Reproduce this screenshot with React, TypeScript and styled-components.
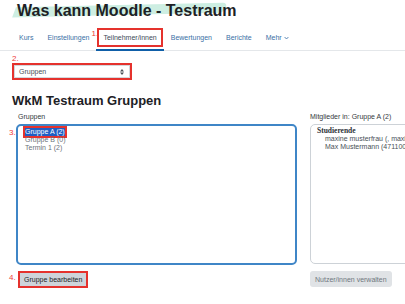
import styled, { createGlobalStyle } from "styled-components";

const GlobalStyle = createGlobalStyle`
  html, body {
    margin: 0;
    padding: 0;
    background: #ffffff;
  }

  body {
    font-family: "Liberation Sans", Arial, sans-serif;
    color: #1d2125;
    width: 405px;
    height: 304px;
    overflow: hidden;
  }
`;

const red = "#e5322d";

const Page = styled.div`
  width: 405px;
  padding-top: 1px;
`;

const TitleRow = styled.div`
  padding-left: 17px;
`;

const Title = styled.h1`
  position: relative;
  isolation: isolate;
  display: inline-block;
  margin: 0;
  font-size: 16px;
  line-height: 20px;
  font-weight: 700;
  color: #1d2125;
  white-space: nowrap;

  &::before {
    content: "";
    position: absolute;
    left: -3px;
    width: 212px;
    top: 4px;
    height: 10px;
    background: #cdeee2;
    border-radius: 0 5px 5px 0;
    transform: rotate(-1.3deg) skewX(-22deg);
    z-index: -1;
  }
`;

const Nav = styled.ul`
  list-style: none;
  display: flex;
  margin: 6px 0 0;
  padding: 0 0 0 12px;
  border-bottom: 1px solid #e4e7ea;
`;

const NavItem = styled.li<{ $active?: boolean }>`
  padding: 1px 1px 2px;
  border-bottom: 2px solid ${(p) => (p.$active ? "#0f5fa8" : "transparent")};
  margin-bottom: -1px;
`;

const NavLink = styled.a<{ $marked?: boolean }>`
  position: relative;
  display: flex;
  align-items: center;
  gap: 2px;
  height: 15px;
  padding: 0 4px;
  border: 2px solid ${(p) => (p.$marked ? red : "transparent")};
  font-size: 7px;
  color: ${(p) => (p.$marked ? "#3d4a57" : "#3a6fa5")};
  text-decoration: none;
  white-space: nowrap;
`;

const Mark = styled.span<{ $left: number; $top: number }>`
  position: absolute;
  left: ${(p) => p.$left}px;
  top: ${(p) => p.$top}px;
  font-size: 8px;
  line-height: 8px;
  color: #ee3b3b;
  white-space: nowrap;
`;

const SelectWrap = styled.div`
  position: relative;
  margin: 12px 0 0 12px;
  width: 116px;
  border: 2px solid ${red};
`;

const SelectBox = styled.div`
  display: flex;
  align-items: center;
  justify-content: space-between;
  height: 11px;
  padding: 0 5px 0 4px;
  border: 1px solid #d4d8dc;
  font-size: 7px;
  color: #495057;
`;

const Heading = styled.h2`
  margin: 13px 0 0 12px;
  font-size: 13px;
  line-height: 16px;
  font-weight: 700;
  color: #1d2125;
`;

const Columns = styled.div`
  display: flex;
  gap: 13px;
  padding-left: 16px;
  margin-top: 3px;
`;

const Column = styled.div<{ $width: number }>`
  flex: 0 0 ${(p) => p.$width}px;
  display: flex;
  flex-direction: column;
  align-items: flex-start;
`;

const Label = styled.div<{ $indent?: number }>`
  padding-left: ${(p) => p.$indent ?? 0}px;
  font-size: 7px;
  line-height: 9px;
  color: #343a40;
  white-space: nowrap;
`;

const ListBox = styled.div<{ $focused?: boolean }>`
  box-sizing: border-box;
  width: 100%;
  height: ${(p) => (p.$focused ? 141 : 140)}px;
  margin-top: 3px;
  padding: ${(p) => (p.$focused ? "2px 0 0 7px" : "2px 0 0 6px")};
  border: ${(p) => (p.$focused ? "2px solid #3f86c7" : "1px solid #cdd2d7")};
  border-radius: 5px;
  overflow: ${(p) => (p.$focused ? "visible" : "hidden")};
`;

const Option = styled.div<{ $selected?: boolean; $marked?: boolean }>`
  position: relative;
  width: fit-content;
  font-size: 7px;
  line-height: 8px;
  white-space: nowrap;
  color: ${(p) => (p.$selected ? "#ffffff" : "#6c737a")};
  background: ${(p) => (p.$selected ? "#1f5ec4" : "transparent")};
  outline: ${(p) => (p.$marked ? `2px solid ${red}` : "none")};
`;

const Group = styled.div`
  font-family: "Liberation Serif", "Times New Roman", serif;
  font-weight: 700;
  font-size: 7.5px;
  line-height: 8px;
  color: #2b3036;
`;

const Member = styled.div`
  padding-left: 8px;
  font-size: 7px;
  line-height: 8px;
  color: #495057;
  white-space: nowrap;
`;

const ButtonFrame = styled.div`
  position: relative;
  margin-top: 6px;
  margin-left: 2px;
  border: 2px solid ${red};
`;

const Button = styled.button<{ $disabled?: boolean }>`
  display: block;
  height: ${(p) => (p.$disabled ? 16 : 13)}px;
  margin: ${(p) => (p.$disabled ? "7px 0 0" : "0")};
  padding: 0 ${(p) => (p.$disabled ? 5 : 4)}px;
  border: none;
  border-radius: ${(p) => (p.$disabled ? 3 : 0)}px;
  background: ${(p) => (p.$disabled ? "#e0e3e6" : "#ced4da")};
  font-family: "Liberation Sans", Arial, sans-serif;
  font-size: 7px;
  color: ${(p) => (p.$disabled ? "#6f777e" : "#1d2125")};
  white-space: nowrap;
`;

function Chevron() {
  return (
    <svg width="5" height="4" viewBox="0 0 5 4">
      <path d="M0.6 1 L2.5 3 L4.4 1" fill="none" stroke="#3a6fa5" strokeWidth="0.8" />
    </svg>
  );
}

function UpDown() {
  return (
    <svg width="4" height="6" viewBox="0 0 4 6">
      <path d="M2 0 L4 2.4 H0 Z M2 6 L4 3.6 H0 Z" fill="#495057" />
    </svg>
  );
}

const tabs = [
  { label: "Kurs" },
  { label: "Einstellungen" },
  { label: "Teilnehmer/innen", active: true },
  { label: "Bewertungen" },
  { label: "Berichte" },
];

export default function App() {
  return (
    <>
      <GlobalStyle />
      <Page>
        <TitleRow>
          <Title>Was kann Moodle - Testraum</Title>
        </TitleRow>

        <Nav>
          {tabs.map((t) => (
            <NavItem key={t.label} $active={t.active}>
              <NavLink $marked={t.active}>
                {t.active && (
                  <Mark $left={-8} $top={0}>
                    1.
                  </Mark>
                )}
                {t.label}
              </NavLink>
            </NavItem>
          ))}
          <NavItem>
            <NavLink>
              Mehr <Chevron />
            </NavLink>
          </NavItem>
        </Nav>

        <SelectWrap>
          <Mark $left={-2} $top={-10}>
            2.
          </Mark>
          <SelectBox>
            <span>Gruppen</span>
            <UpDown />
          </SelectBox>
        </SelectWrap>

        <Heading>WkM Testraum Gruppen</Heading>

        <Columns>
          <Column $width={281}>
            <Label $indent={2}>Gruppen</Label>
            <ListBox $focused>
              <Option $selected $marked>
                <Mark $left={-16} $top={1}>
                  3.
                </Mark>
                Gruppe A (2)
              </Option>
              <Option>Gruppe B (0)</Option>
              <Option>Termin 1 (2)</Option>
            </ListBox>
            <ButtonFrame>
              <Mark $left={-11} $top={1}>
                4.
              </Mark>
              <Button>Gruppe bearbeiten</Button>
            </ButtonFrame>
          </Column>

          <Column $width={120}>
            <Label>Mitglieder in: Gruppe A (2)</Label>
            <ListBox>
              <Group>Studierende</Group>
              <Member>maxine musterfrau (, maxine@example.org)</Member>
              <Member>Max Mustermann (4711000)</Member>
            </ListBox>
            <Button $disabled>Nutzer/innen verwalten</Button>
          </Column>
        </Columns>
      </Page>
    </>
  );
}
